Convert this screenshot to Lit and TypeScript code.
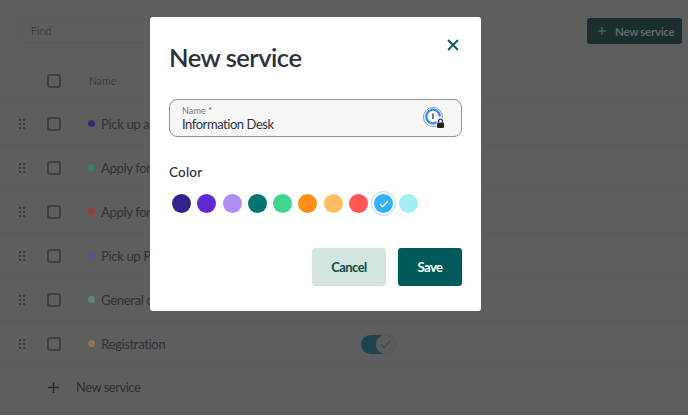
import { LitElement, html, css, svg } from "lit";
import { customElement } from "lit/decorators.js";

const rows = [
  { c: "#3f2a78", t: "Pick up a" },
  { c: "#3a8060", t: "Apply for" },
  { c: "#9a3a3a", t: "Apply for" },
  { c: "#644f92", t: "Pick up P" },
  { c: "#5a8a86", t: "General q" },
  { c: "#98744c", t: "Registration", toggle: true },
];
const swatches = ["#35208f", "#6128cf", "#ae8ff0", "#007471", "#40d48e", "#ff9017", "#ffbd5e", "#ff5555", "#33b1ff", "#a6ecf7"];

const grip = svg`<svg width="6" height="10" viewBox="0 0 6 10" fill="currentColor">
  ${[1, 5, 9].flatMap((y) => [1, 5].map((x) => svg`<circle cx=${x} cy=${y} r="0.9"></circle>`))}
</svg>`;

@customElement("app-root")
export class AppRoot extends LitElement {
  static styles = css`
    :host { display: block; position: relative; height: 415px; overflow: hidden; background: #5e5e5e;
      font-family: "Lato", "Noto Sans", sans-serif; }
    .page { height: 415px; display: flex; flex-direction: column; color: #2a2c2e; }
    .top { display: flex; justify-content: space-between; align-items: center; height: 26px; margin-top: 18px; padding: 0 6px 0 20px; }
    .find { width: 200px; height: 23px; box-sizing: border-box; border: 1px solid #5a5a5a; border-radius: 4px; padding-left: 10px;
      display: flex; align-items: center; font-size: 10.5px; color: #3f3f3f; letter-spacing: .1px; }
    .add { width: 95px; height: 26px; border-radius: 3px; background: #1a2e2e; color: #5f6a6a; font-size: 11.5px; letter-spacing: -.3px; font-weight: 700; display: flex; align-items: center; box-sizing: border-box; padding-left: 11px; gap: 9px; white-space: nowrap; }
    .add svg { flex: none; }
    .head { height: 42px; margin-top: 16px; box-sizing: border-box; padding-left: 47px; display: flex; align-items: center; gap: 28px; border-bottom: 1px solid #595959; font-size: 10.5px; color: #3f4042; }
    .box { width: 10px; height: 10px; border: 2px solid #3c4040; border-radius: 3px; flex: none; }
    .row { height: 44px; box-sizing: border-box; display: flex; align-items: center; border-bottom: 1px solid #595959; font-size: 13.2px; letter-spacing: -.4px; color: #303234; position: relative; }
    .grip { width: 47px; box-sizing: border-box; padding-left: 19px; color: #2e2e2e; display: flex; }
    .dot { width: 7px; height: 7px; border-radius: 50%; margin: 0 6px 0 27px; flex: none; }
    .toggle { position: absolute; left: 361px; top: 13px; width: 34px; height: 20px; }
    .track { width: 28px; height: 19px; border-radius: 10px; background: #1f4450; }
    .knob { position: absolute; left: 15px; top: 0; width: 19px; height: 19px; border-radius: 50%; background: #5c5c5c; box-shadow: 0 0 2px #4a4a4a; display: flex; align-items: center; justify-content: center; }
    .more { display: flex; align-items: center; height: 44px; margin-top: -1px; padding-left: 47px; gap: 16px; font-size: 12.8px; letter-spacing: -.4px; color: #2c2e30; }

    .overlay { position: absolute; inset: 0; padding: 17px 0 0 150px; }
    .modal { width: 331px; height: 294px; box-sizing: border-box; background: #fff; border-radius: 3px; padding: 23px 19px 0; display: flex; flex-direction: column; color: #2b2e3a; }
    .title-row { display: flex; justify-content: space-between; align-items: flex-start; height: 59px; }
    h2 { margin: 0; font-size: 25.5px; letter-spacing: -.5px; line-height: 34px; font-weight: 600; color: #2c2f3c; }
    .close { margin: -1px 3px 0 0; color: #005a5a; display: flex; }
    .field { height: 38px; box-sizing: border-box; border: 1px solid #8a9499; border-radius: 8px; background: #f6f6f6; padding: 4px 12px 0; position: relative; }
    .lab { font-size: 9px; line-height: 13px; color: #6f7378; letter-spacing: .1px; }
    .lab b { color: #b02a2a; font-weight: 400; }
    .val { font-size: 13px; line-height: 15px; color: #2d3340; letter-spacing: -.45px; }
    .onepass { position: absolute; right: 15px; top: 6px; display: flex; }
    .clabel { margin-top: 27px; font-size: 13.5px; line-height: 17px; font-weight: 500; letter-spacing: .2px; }
    .swatches { display: flex; gap: 6.25px; margin: 13px 0 0 3px; }
    .sw { width: 19px; height: 19px; border-radius: 50%; position: relative; display: flex; align-items: center; justify-content: center; }
    .sw.sel::after { content: ""; position: absolute; inset: -3px; border: 1.5px solid #a9dcff; border-radius: 50%; }
    .actions { display: flex; justify-content: flex-end; gap: 12px; margin-top: 35px; }
    button { height: 38px; border: 0; border-radius: 3px; font: 700 13px "Lato", "Noto Sans", sans-serif; letter-spacing: -.55px; padding: 0; }
    .cancel { width: 74px; background: #d3e5de; color: #0e4a4e; }
    .save { width: 64px; background: #005b5b; color: #fff; }
  `;

  render() {
    return html`
      <div class="page">
        <div class="top">
          <div class="find">Find</div>
          <div class="add">
            <svg width="8" height="8" viewBox="0 0 8 8" stroke="#5f6a6a" stroke-width="1.1"><path d="M4 0v8M0 4h8"></path></svg>
            New service
          </div>
        </div>
        <div class="head"><span class="box"></span><span>Name</span></div>
        ${rows.map((r) => html`
          <div class="row">
            <span class="grip">${grip}</span>
            <span class="box"></span>
            <span class="dot" style="background:${r.c}"></span>
            <span>${r.t}</span>
            ${r.toggle ? html`<div class="toggle"><div class="track"></div><div class="knob">
              <svg width="11" height="9" viewBox="0 0 11 9" fill="none" stroke="#2f5555" stroke-width="1.3"><path d="M1 4.5 4 7.5 10 1"></path></svg>
            </div></div>` : ""}
          </div>`)}
        <div class="more">
          <svg width="13" height="13" viewBox="0 0 13 13" stroke="#24282a" stroke-width="1.5"><path d="M6.5 1v11M1 6.5h11"></path></svg>
          New service
        </div>
      </div>
      <div class="overlay">
        <div class="modal">
          <div class="title-row">
            <h2>New service</h2>
            <span class="close"><svg width="12" height="12" viewBox="0 0 12 12" stroke="currentColor" stroke-width="1.8" fill="none"><path d="M1 1l10 10M11 1 1 11"></path></svg></span>
          </div>
          <div class="field">
            <div class="lab">Name <b>*</b></div>
            <div class="val">Information Desk</div>
            <span class="onepass">
              <svg width="24" height="24" viewBox="0 0 24 24" fill="none">
                <circle cx="11" cy="11" r="9.5" stroke="#8c9aa8" stroke-width="1"></circle>
                <path d="M15 16a6.8 6.8 0 1 1 2.8-5.5" stroke="#2f8cf0" stroke-width="2.3"></path>
                <path d="M11 7.5v5.5" stroke="#4a4f55" stroke-width="1.5"></path>
                <rect x="14.5" y="12" width="8" height="10.5" rx="2" fill="#f6f6f6"></rect>
                <rect x="15" y="16.5" width="7" height="5.5" rx="1" fill="#222"></rect>
                <path d="M16.6 16.5v-1.6a1.9 1.9 0 0 1 3.8 0v1.6" stroke="#222" stroke-width="1.2"></path>
              </svg>
            </span>
          </div>
          <div class="clabel">Color</div>
          <div class="swatches">
            ${swatches.map((c, i) => html`<span class="sw ${i === 8 ? "sel" : ""}" style="background:${c}">
              ${i === 8 ? html`<svg width="10" height="8" viewBox="0 0 10 8" fill="none" stroke="#fff" stroke-width="1.3"><path d="M1 4l2.6 2.6L9 1"></path></svg>` : ""}
            </span>`)}
          </div>
          <div class="actions">
            <button class="cancel">Cancel</button>
            <button class="save">Save</button>
          </div>
        </div>
      </div>
    `;
  }
}
